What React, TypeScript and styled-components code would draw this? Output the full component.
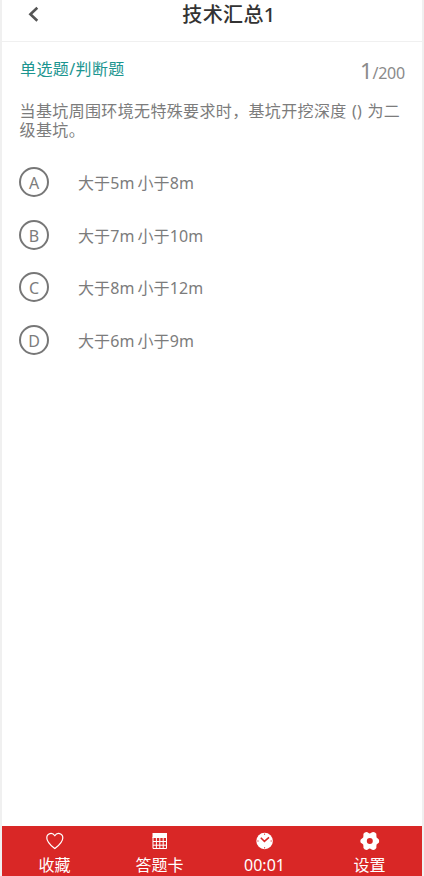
import React from 'react';
import styled, { createGlobalStyle } from 'styled-components';

const GlobalStyle = createGlobalStyle`
  * { box-sizing: border-box; }
  body { margin: 0; background: #fff; }
`;

const Screen = styled.div`
  width: 424px;
  height: 876px;
  display: flex;
  flex-direction: column;
  overflow: hidden;
  background: #fff;
  border: solid #f0f0f0;
  border-width: 0 2px;
  font-family: 'Noto Sans', 'Noto Sans CJK SC', sans-serif;
  color: #7c7c7c;
`;

const Header = styled.header`
  height: 42px;
  flex: none;
  display: grid;
  grid-template-columns: 60px 1fr 60px;
  border-bottom: 1px solid #f0f0f0;
`;

const BackButton = styled.button`
  display: flex;
  align-items: flex-start;
  padding: 6px 0 0 25px;
  border: 0;
  background: none;
`;

const Title = styled.h1`
  margin: 0;
  padding: 1px 0 0 34px;
  font-size: 20px;
  line-height: 28px;
  font-weight: 500;
  letter-spacing: 0.4px;
  text-align: center;
  color: #333;
  white-space: nowrap;
`;

const Content = styled.main`
  flex: 1;
  padding: 15px 17px 0 17px;
`;

const Meta = styled.div`
  height: 28px;
  display: flex;
  justify-content: space-between;
  align-items: flex-start;
`;

const Category = styled.div`
  padding-left: 1px;
  font-size: 16px;
  line-height: 24px;
  letter-spacing: 0.4px;
  color: #1c9590;
`;

const Progress = styled.div`
  font-size: 16px;
  line-height: 26px;
  letter-spacing: -0.2px;
  color: #8a8a8a;
`;

const Current = styled.span`
  font-size: 22px;
`;

const Question = styled.p`
  margin: 17px -6px 0 0;
  padding-left: 0.6px;
  font-size: 16px;
  line-height: 19px;
  letter-spacing: 0.35px;
  word-spacing: 0.8px;
  white-space: pre;
`;

const Options = styled.div`
  margin-top: 27px;
  display: grid;
  grid-auto-rows: 52.5px;
`;

const Option = styled.div`
  display: flex;
  align-items: flex-start;
  gap: 29px;
`;

const Letter = styled.span`
  width: 30px;
  height: 30px;
  display: flex;
  justify-content: center;
  align-items: center;
  border: 2px solid #777;
  border-radius: 50%;
  font-size: 16px;
  line-height: 26px;
  padding-top: 2px;
`;

const OptionText = styled.span`
  font-size: 16px;
  line-height: 32px;
  letter-spacing: 0.1px;
  display: flex;
  gap: 3px;
`;

const TabBar = styled.nav`
  height: 50px;
  flex: none;
  display: grid;
  grid-template-columns: repeat(4, 1fr);
  background: #d92726;
  color: #fff;
`;

const Tab = styled.div`
  display: flex;
  flex-direction: column;
  align-items: center;
  padding-top: 5px;
  font-size: 16px;
  line-height: 24px;

  svg { display: block; flex: none; margin-bottom: 2px; }
`;

const HeartIcon = () => (
  <svg width="20" height="20" viewBox="0 0 20 20" fill="none" stroke="#fff" strokeWidth="1.2" strokeLinejoin="round">
    <path d="M9.8 17.6C6.6 15 1.8 11.3 1.8 6.9C1.8 2.1 7.5 .8 9.8 4.8C12.1 .8 17.8 2.1 17.8 6.9C17.8 11.3 13 15 9.8 17.6Z" />
  </svg>
);

const SheetIcon = () => (
  <svg width="20" height="20" viewBox="0 0 20 20" fill="none" stroke="#fff">
    <path d="M2.5 2H17V7H2.5Z" fill="#fff" stroke="none" />
    <path d="M3 6V17.5H16.5V6M3 10.5H17M3 14.2H17M6.4 7V18M9.8 7V18M13.2 7V18" strokeWidth="1" />
  </svg>
);

const ClockIcon = () => (
  <svg width="20" height="20" viewBox="0 0 20 20" fill="none">
    <circle cx="9.6" cy="10" r="8.3" fill="#fff" />
    <path d="M5.8 6.8L9.4 10.4L14 6.4" stroke="#d92726" strokeWidth="1.5" />
    <path d="M9.6 2.5V4M9.6 16V17.5M2.2 10H3.7M15.5 10H17" stroke="#d92726" strokeWidth="0.8" />
  </svg>
);

const GearIcon = () => (
  <svg width="20" height="20" viewBox="0 0 20 20" fill="#fff">
    <path fillRule="evenodd" d="M4.8 1.5Q7 .4 8.2 1.8Q9.7 3 11.2 1.8Q13 .4 15 1.5Q17 2.5 16.4 4.9Q16.1 6.8 17.8 7.4Q19.2 8 19.2 10Q19.2 12 17.8 12.6Q16.1 13.2 16.4 15.1Q17 17.5 15 18.5Q13 19.6 11.2 18.2Q9.7 17 8.2 18.2Q7 19.6 4.8 18.5Q2.8 17.5 3.4 15.1Q3.7 13.2 2 12.6Q.3 12 .3 10Q.3 8 2 7.4Q3.7 6.8 3.4 4.9Q2.8 2.5 4.8 1.5ZM9.8 7A3 3 0 1 0 9.8 13A3 3 0 1 0 9.8 7Z" />
  </svg>
);

const options = [
  ['A', '大于5m', '小于8m'],
  ['B', '大于7m', '小于10m'],
  ['C', '大于8m', '小于12m'],
  ['D', '大于6m', '小于9m'],
];

const tabs = [
  { label: '收藏', Icon: HeartIcon },
  { label: '答题卡', Icon: SheetIcon },
  { label: '00:01', Icon: ClockIcon },
  { label: '设置', Icon: GearIcon },
];

export default function App() {
  return (
    <>
      <GlobalStyle />
      <Screen>
        <Header>
          <BackButton aria-label="返回">
            <svg width="12" height="17" viewBox="0 0 12 17" fill="none" stroke="#555" strokeWidth="2.6">
              <path d="M10.3 1.8L3.4 8.3L10.3 14.8" />
            </svg>
          </BackButton>
          <Title>技术汇总1</Title>
        </Header>
        <Content>
          <Meta>
            <Category>单选题/判断题</Category>
            <Progress><Current>1</Current>/200</Progress>
          </Meta>
          <Question>{'当基坑周围环境无特殊要求时，基坑开挖深度 () 为二\n级基坑。'}</Question>
          <Options>
            {options.map(([letter, lower, upper]) => (
              <Option key={letter}>
                <Letter>{letter}</Letter>
                <OptionText><span>{lower}</span><span>{upper}</span></OptionText>
              </Option>
            ))}
          </Options>
        </Content>
        <TabBar>
          {tabs.map(({ label, Icon }) => (
            <Tab key={label}><Icon />{label}</Tab>
          ))}
        </TabBar>
      </Screen>
    </>
  );
}
